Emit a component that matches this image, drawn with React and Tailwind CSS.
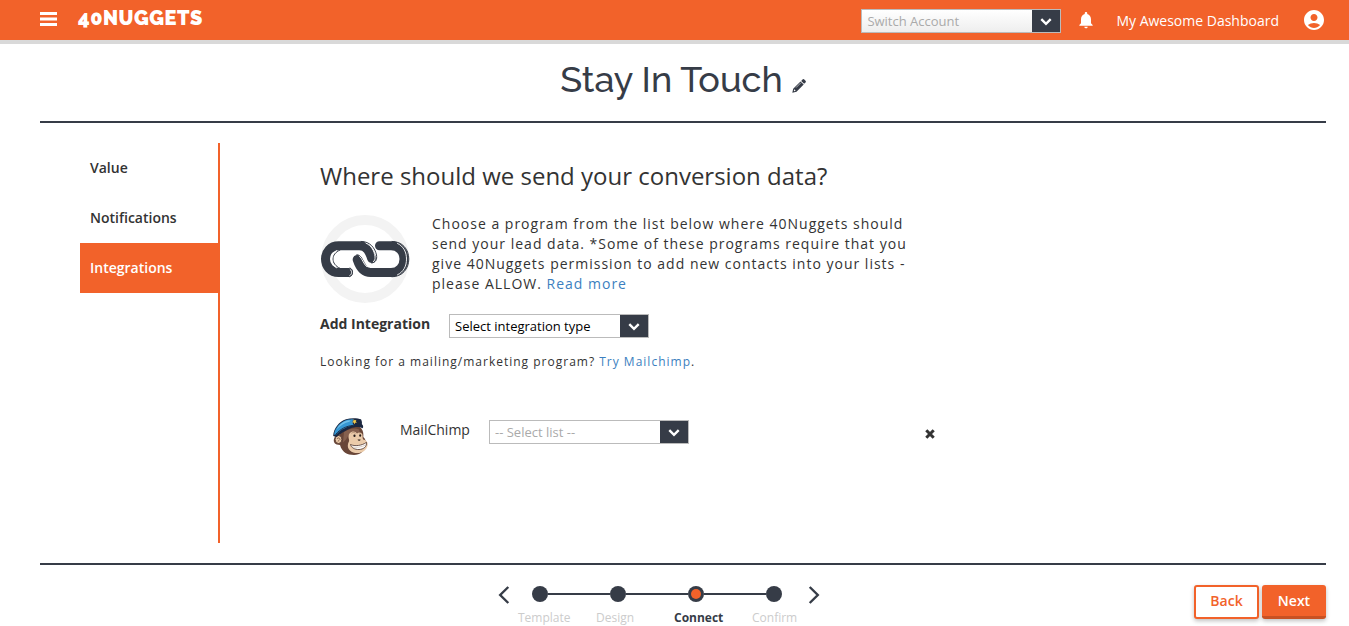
import React from "react";
import { MdNotifications, MdAccountCircle } from "react-icons/md";

function Chevron() {
  return (
    <svg viewBox="0 0 12 8" className="h-2 w-3" fill="none" stroke="#fff" strokeWidth="2.4" aria-hidden="true">
      <path d="M1.3 1.2 6 5.8l4.7-4.6" />
    </svg>
  );
}

function Select({ id, label, placeholder, className }) {
  return (
    <div className="relative h-6 w-[200px]">
      <select
        id={id}
        aria-label={label}
        defaultValue=""
        className={"block h-6 w-full appearance-none rounded-none border border-[#bbb] pr-8 pl-[5px] text-[13px] leading-5 outline-none " + className}
      >
        <option value="">{placeholder}</option>
      </select>
      <span className="pointer-events-none absolute top-px right-px bottom-px flex w-7 items-center justify-center bg-[#363c47] pt-0.5">
        <Chevron />
      </span>
    </div>
  );
}

function Header() {
  return (
    <header className="flex h-11 items-center justify-between border-b-4 border-[#d9d9d9] bg-[#f2622a] pr-[23px] pl-10 text-white">
      <div className="flex items-center gap-[21px]">
        <button type="button" aria-label="Menu" className="pb-0.5">
          <svg viewBox="0 0 17 14" className="h-3.5 w-[17px]" fill="#fff">
            <path d="M0 0h17v3H0zM0 5.5h17v3H0zM0 11h17v3H0z" />
          </svg>
        </button>
        <a href="#home" className="pb-1 font-[Raleway,Lato,sans-serif] text-[20px] leading-6 font-black tracking-wide">
          40NUGGETS
        </a>
      </div>
      <div className="flex items-center">
        <div className="pt-0.5">
          <Select id="account" label="Switch Account" placeholder="Switch Account" className="bg-linear-to-b from-white to-[#eee] text-[#aaa]" />
        </div>
        <button type="button" aria-label="Notifications" className="ml-[15px] text-[20px]">
          <MdNotifications />
        </button>
        <a href="#dashboard" className="ml-5 text-[14px]">My Awesome Dashboard</a>
        <button type="button" aria-label="Profile" className="ml-[23px] text-[24px]">
          <MdAccountCircle />
        </button>
      </div>
    </header>
  );
}

function Pencil() {
  return (
    <svg viewBox="0 0 14 14" className="h-3.5 w-3.5" aria-hidden="true">
      <path fill="#363c47" d="M9.200 1.900 10.500.5a1.300 1.300 0 0 1 1.800 0l1.200 1.200a1.300 1.300 0 0 1 0 1.800l-1.400 1.300zM8.500 2.400l3.200 3.200-7.200 7.200L.3 13.700l.9-4z" />
      <path fill="none" stroke="#fff" strokeWidth=".6" d="m4 8.600 4.800-4.800" />
      <path fill="#fff" d="m2.200 10.300 1.500 1.500-1.300.4-.6-.6z" />
    </svg>
  );
}

function LinkArt() {
  return (
    <svg viewBox="0 0 90 90" className="h-[90px] w-[90px] shrink-0" aria-hidden="true">
      <circle cx="45" cy="45" r="39" fill="none" stroke="#f3f3f3" strokeWidth="10" />
      <path fill="#fff" d="M18 27h24c8 0 12 3 14 8l3-8h12c10 0 16 8 16 18s-6 18-17 18H48l-9-6-5 6H18C8 63 1 55 1 45s7-18 17-18z" />
      <g fill="none" strokeLinecap="round">
        <path stroke="#363c47" strokeWidth="9" d="M28.500 58.500H18.500C10.500 58.500 5.500 52 5.500 45s5-13.300 13-13.300H39.500C47 31.700 49.500 38 51.700 44.500" />
        <path stroke="#363c47" strokeWidth="9" d="M59.500 31.700H71c8 0 13 6 13 13.300s-5 13.500-13 13.500H50.500C43 58.500 39.500 52.500 37.200 45.500" />
        <path stroke="#363c47" strokeWidth="1" d="M20 36c-9.500 4-9.500 14 0 18.300M41 27.400c9.500 0 14 7 15.500 13.600.8 4.500-.8 7.500-4.800 8M72 27.400c10.500 0 16.800 8 16.800 17.600S82.500 62.800 72 62.800M36.700 40.800c4.500-.8 6.300 6.700 9.800 11.700M30 54c3.500 1 3.500 7.500-.6 8.800" />
        <path stroke="#fff" strokeWidth=".9" d="M16.500 36.500c-6.500 4-6.500 13.300 0 17.300M46 29.200c5.500 2.500 8.300 7.500 9 13.600.3 2.500-.4 4-1.700 4.900M77.500 29.400c6.300 3 9 9 9 15.700s-2.700 12.700-9 15.700M39.500 42.200c3 2.600 3.800 7.500 7.200 10.500M30.200 55.500c2.200 1.500 1.800 5-.4 6" />
      </g>
    </svg>
  );
}

function Monkey() {
  return (
    <svg viewBox="0 0 36 38" className="h-[38px] w-9" aria-hidden="true">
      <path fill="#694638" d="M8 13c7-6 15-7 20-3 2.500 3 2.500 6 2.300 9 2 2 3.300 4.500 2.700 8-1 6-6 10-12 10-7 0-12-3-14-10-5 0-7-3-6-6 .5-3 3-4 5-4z" />
      <path fill="#85604e" d="M11 14c5-3.500 11-4.500 15-2.500l1 4-6-1-5 2-3 5-3 3z" />
      <ellipse cx="5.500" cy="21.500" rx="3.400" ry="4" fill="#e9c7a5" stroke="#4b3129" strokeWidth=".8" />
      <path fill="none" stroke="#694638" strokeWidth=".8" d="M4 21c1-1.800 3-1.200 3.200.8M4.800 23.500l1.600-1.500" />
      <path fill="#ebcbaa" d="M16.500 15.500c3-3 6-2 7.500 0 2-1.800 5-1 5.500 1.300.4 2-.3 3.300.7 4.600 3 .8 5 2.500 4.500 5.500-.8 5-5.500 8.200-10.200 8.200-6 0-10.800-4-9.500-9.200.4-1.600 1.500-2.700 1-4.400-.6-2-.8-4.400.5-6z" />
      <path fill="#fff" stroke="#4b3129" strokeWidth=".8" d="M17.500 26.500c4 2 11.500 1.300 16-2.200.4 4.400-2.800 7-7.500 7.200-4.400.1-7.800-1.800-8.500-5z" />
      <path fill="none" stroke="#b99c84" strokeWidth=".5" d="M19 28.800c4 1 9.500.6 13.500-1.800" />
      <path fill="none" stroke="#99745d" strokeWidth=".6" d="M18.500 15.300c1.500-1.200 2.800-1 4 0M26 15.200c1-.8 2-.6 2.700.2" />
      <g fill="#271d1b">
        <ellipse cx="21.500" cy="17.800" rx="1.100" ry="1.300" />
        <ellipse cx="27.200" cy="17.500" rx="1" ry="1.200" />
        <path d="M24.500 21.800c1-.6 2.600-.5 3.200 0-.6 1.100-2.400 1.200-3.200 0z" />
      </g>
      <path fill="#1b2740" d="M3.500 19 .2 18C.5 10.500 6 3.500 13 1.200 18-.3 25 0 28 1.300c.9 1.800 1.200 3.400.8 4.800 1.500 1.300 1.800 3 .8 4.200-3.200-1.800-7.800-1.800-12.400.2C12.300 12.600 7.500 15.500 3.500 19z" />
      <path fill="#3697d3" d="M1 16.800C2 9.500 8 3.400 14.500 1.800c3-.7 4.500-.7 6-.6-1.500 2-1 4.500.3 6-6.500 1.300-12.800 4-17.600 9.300z" />
      <path fill="#70c0e9" d="M3.500 11.500C6 7 9.500 3.800 14.500 2.600l3-.4-1 1.500C11.500 4.600 7.500 7.500 3.500 11.500z" />
      <path fill="none" stroke="#1b2740" strokeWidth=".9" d="M2.600 16.500C7 11.200 13 8 20.500 7.300" />
      <path fill="#f3ca4a" d="m20.500 1.200 1.100 1.100 1.700-.4-.5 1.500 1.200 1.200-1.800.2-.9 1.500-.6-1.700-1.800-.4 1.400-1z" />
    </svg>
  );
}

const NAV = [
  { label: "Value", active: false },
  { label: "Notifications", active: false },
  { label: "Integrations", active: true },
];

function SideNav() {
  return (
    <nav className="ml-10 min-h-[400px] w-[140px] shrink-0 border-r-2 border-[#f2622a]">
      {NAV.map((n) => (
        <a
          key={n.label}
          href={"#" + n.label.toLowerCase()}
          aria-current={n.active ? "page" : undefined}
          className={"flex h-[50px] items-center pb-0.5 pl-2.5 text-[14px] font-semibold " + (n.active ? "bg-[#f2622a] text-white" : "text-[#333]")}
        >
          {n.label}
        </a>
      ))}
    </nav>
  );
}

const STEPS = ["Template", "Design", "Connect", "Confirm"];

function Arrow({ d, label }) {
  return (
    <button type="button" aria-label={label} className="mt-[21px]">
      <svg viewBox="0 0 12 18" className="h-[18px] w-3" fill="none" stroke="#363c47" strokeWidth="2.400">
        <path d={d} />
      </svg>
    </button>
  );
}

function Stepper() {
  return (
    <div className="col-start-2 flex items-start pr-12">
      <Arrow label="Previous step" d="M10.300 1 2.200 9l8.100 8" />
      <ol className="mr-2.5 ml-2 flex pt-[21px]">
        {STEPS.map((s, i) => {
          const last = i === STEPS.length - 1;
          const active = s === "Connect";
          return (
            <li key={s} className={last ? "w-[46px]" : "w-[78px]"}>
              <div className="flex items-center">
                <span className={"h-0.5 w-3.5 " + (i > 0 ? "bg-[#363c47]" : "")} />
                <span className={"h-4 w-4 rounded-full bg-[#363c47] " + (active ? "p-[3px]" : "")}>
                  {active && <span className="block h-2.5 w-2.5 rounded-full bg-[#f2622a]" />}
                </span>
                <span className={"h-0.5 flex-1 " + (last ? "" : "bg-[#363c47]")} />
              </div>
              <div className={"mt-2 text-[12px] leading-4 " + (active ? "font-bold text-[#363c47]" : "text-[#ccc]")}>{s}</div>
            </li>
          );
        })}
      </ol>
      <Arrow label="Next step" d="M1.700 1l8.100 8-8.100 8" />
    </div>
  );
}

export default function App() {
  return (
    <div className="min-h-screen bg-white font-['Open_Sans',sans-serif] text-[#333]">
      <Header />
      <main className="pr-[23px] pl-10">
        <div className="flex h-[79px] items-center justify-center border-b-2 border-[#363c47] pb-2">
          <h1 className="font-[Raleway,Lato,sans-serif] text-[36px] leading-[50px] font-medium text-[#363c47]">Stay In Touch</h1>
          <button type="button" aria-label="Edit name" className="mt-3.5 ml-[9px]">
            <Pencil />
          </button>
        </div>
        <div className="flex py-5">
          <SideNav />
          <section className="ml-[100px] w-[620px]">
            <h2 className="mt-[15px] text-[24px] leading-9">Where should we send your conversion data?</h2>
            <div className="mt-5 flex gap-[22px]">
              <LinkArt />
              <p className="w-[490px] text-[14px] leading-5 tracking-[1px]">
                Choose a program from the list below where 40Nuggets should send your lead data. *Some of these programs require that you give 40Nuggets permission to add new contacts into your lists - please ALLOW. <a href="#more" className="text-[#3c7fc0]">Read more</a>
              </p>
            </div>
            <div className="mt-2.5 flex">
              <label htmlFor="integration" className="w-[129px] text-[14px] leading-5 font-bold">Add Integration</label>
              <Select id="integration" placeholder="Select integration type" className="bg-white text-black" />
            </div>
            <p className="mt-[15px] text-[12px] leading-[18px] tracking-[1px]">
              Looking for a mailing/marketing program? <a href="#mailchimp" className="text-[#3c7fc0]">Try Mailchimp</a>.
            </p>
            <div className="mt-[46px] flex items-start">
              <div className="ml-[13px] w-[67px] pt-px">
                <Monkey />
              </div>
              <label htmlFor="list" className="w-[89px] pt-px text-[14px] leading-6">MailChimp</label>
              <div className="pt-[3px]">
                <Select id="list" placeholder="-- Select list --" className="bg-white text-[#aaa]" />
              </div>
              <button type="button" aria-label="Remove MailChimp" className="mt-3 mr-[5px] ml-auto">
                <svg viewBox="0 0 10 10" className="h-2.5 w-2.5" stroke="#333" strokeWidth="3">
                  <path d="m1.300 1.300 7.400 7.400M8.700 1.300 1.300 8.700" />
                </svg>
              </button>
            </div>
          </section>
        </div>
        <footer className="grid grid-cols-[1fr_auto_1fr] items-start border-t-2 border-[#363c47]">
          <Stepper />
          <div className="mt-5 flex justify-end gap-[3px] text-[14px]">
            <button type="button" className="h-[34px] w-[65px] rounded-[3px] border-2 border-[#f2622a] bg-white pb-1 font-semibold text-[#f2622a] shadow-[0_2px_4px_rgba(0,0,0,0.25)]">Back</button>
            <button type="button" className="h-[34px] w-16 rounded-[3px] border-b-3 border-[#c85123] bg-[#f2622a] font-semibold text-white shadow-[0_2px_4px_rgba(0,0,0,0.25)]">Next</button>
          </div>
        </footer>
      </main>
    </div>
  );
}
